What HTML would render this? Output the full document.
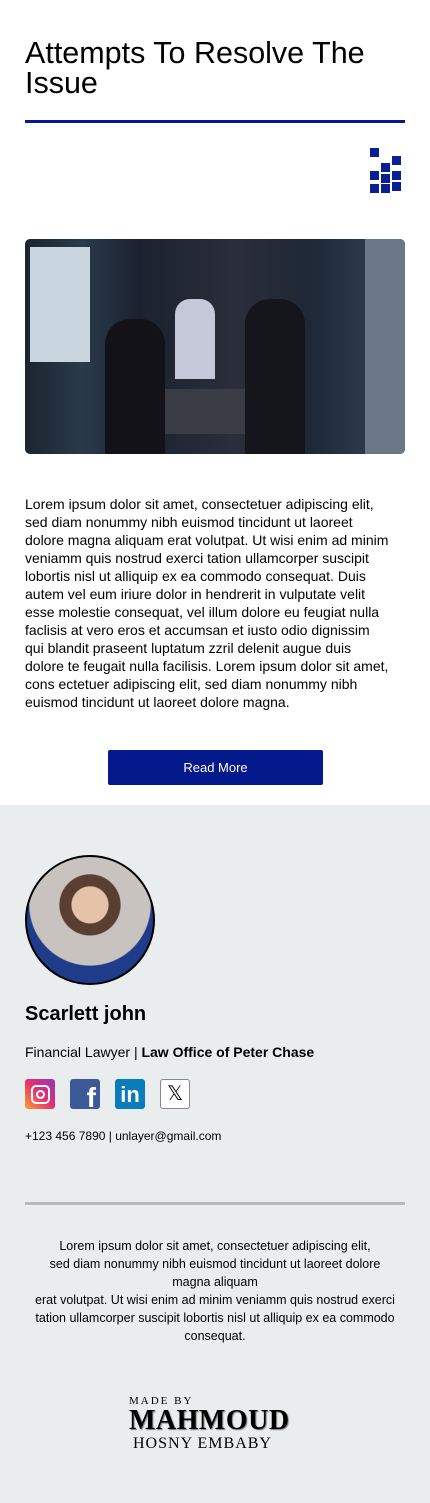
<!DOCTYPE html>
<html><head><meta charset="utf-8"><style>
body{margin:0;width:430px;font-family:"Liberation Sans",sans-serif;background:#fff;color:#000}
.top{position:relative;height:805px}
h1{position:absolute;left:25px;top:38px;margin:0;font-weight:normal;font-size:30.5px;line-height:30px;width:395px}
.rule{position:absolute;left:25px;top:120px;width:380px;height:3px;background:#041a8c}
.sq{position:absolute;width:9px;height:9px;background:#0a1f91}
.photo{position:absolute;left:25px;top:239px;width:380px;height:215px;border-radius:5px;overflow:hidden;background:linear-gradient(90deg,#1c2430 0%,#2a3a4a 15%,#1a2230 30%,#2b2e3a 55%,#1e2836 75%,#34465a 100%)}
.p{position:absolute;left:25px;top:495px;width:366px;font-size:14px;line-height:18px}
.btn{position:absolute;left:108px;top:750px;width:215px;height:35px;background:#041a8c;color:#fff;font-size:13px;text-align:center;line-height:35px;border-radius:2px}
.bot{position:relative;height:698px;background:#eaedee}
.av{position:absolute;left:25px;top:50px;width:126px;height:126px;border-radius:50%;border:2px solid #000;background:radial-gradient(circle at 50% 38%,#e6c2a8 0 18%,#5a3e32 19% 30%,#c9c3c0 31% 60%,#1f3c8a 61%)}
.name{position:absolute;left:25px;top:198px;font-size:20px;font-weight:bold}
.role{position:absolute;left:25px;top:239px;font-size:14px}
.ic{position:absolute;top:274px;width:30px;height:30px;border-radius:3px}
.ct{position:absolute;left:25px;top:324px;font-size:12px}
.hr{position:absolute;left:25px;top:397px;width:380px;height:3px;background:#b7b8ba}
.ft{position:absolute;left:35px;top:432px;width:360px;font-size:12.5px;line-height:18px;text-align:center}
.made{position:absolute;left:129px;top:590px;font-family:"Liberation Serif",serif;text-align:left}
</style></head><body>
<div class="top">
<h1>Attempts To Resolve The Issue</h1>
<div class="rule"></div>
<div class="sq" style="left:370px;top:148px"></div>
<div class="sq" style="left:392px;top:156px"></div>
<div class="sq" style="left:381px;top:163px"></div>
<div class="sq" style="left:370px;top:171px"></div>
<div class="sq" style="left:381px;top:174px"></div>
<div class="sq" style="left:392px;top:171px"></div>
<div class="sq" style="left:370px;top:184px"></div>
<div class="sq" style="left:381px;top:184px"></div>
<div class="sq" style="left:392px;top:182px"></div>
<div class="photo">
<div style="position:absolute;left:5px;top:8px;width:60px;height:115px;background:#c9d6e0"></div>
<div style="position:absolute;left:340px;top:0;width:40px;height:215px;background:#6a7888"></div>
<div style="position:absolute;left:95px;top:150px;width:170px;height:45px;background:#3a3c44"></div>
<div style="position:absolute;left:150px;top:60px;width:40px;height:80px;background:#c5c8d8;border-radius:15px 15px 0 0"></div>
<div style="position:absolute;left:220px;top:60px;width:60px;height:155px;background:#15161c;border-radius:25px 25px 0 0"></div>
<div style="position:absolute;left:80px;top:80px;width:60px;height:135px;background:#121218;border-radius:25px 25px 0 0"></div>
</div>
<div class="p">Lorem ipsum dolor sit amet, consectetuer adipiscing elit, sed diam nonummy nibh euismod tincidunt ut laoreet dolore magna aliquam erat volutpat. Ut wisi enim ad minim veniamm quis nostrud exerci tation ullamcorper suscipit lobortis nisl ut alliquip ex ea commodo consequat. Duis autem vel eum iriure dolor in hendrerit in vulputate velit esse molestie consequat, vel illum dolore eu feugiat nulla faclisis at vero eros et accumsan et iusto odio dignissim qui blandit praseent luptatum zzril delenit augue duis dolore te feugait nulla facilisis. Lorem ipsum dolor sit amet, cons ectetuer adipiscing elit, sed diam nonummy nibh euismod tincidunt ut laoreet dolore magna.</div>
<div class="btn">Read More</div>
</div>
<div class="bot">
<div class="av"></div>
<div class="name">Scarlett john</div>
<div class="role">Financial Lawyer | <b>Law Office of Peter Chase</b></div>
<div class="ic" style="left:25px;background:linear-gradient(45deg,#f9a233,#e62f6e 50%,#8a3ab9)"><div style="position:absolute;left:6px;top:6px;width:15px;height:15px;border:2px solid #fff;border-radius:5px"><div style="position:absolute;left:3px;top:3px;width:5px;height:5px;border:2px solid #fff;border-radius:50%"></div></div></div>
<div class="ic" style="left:70px;background:#3d5a98;color:#fff;font-weight:bold;font-size:28px;text-align:right;line-height:38px;overflow:hidden"><span style="margin-right:4px">f</span></div>
<div class="ic" style="left:115px;background:#0a7bbb;color:#fff;font-weight:bold;font-size:22px;text-align:center;line-height:32px">in</div>
<div class="ic" style="left:160px;background:#fff;border:1px solid #888;width:28px;height:28px;font-size:20px;text-align:center;line-height:28px">𝕏</div>
<div class="ct">+123 456 7890 | unlayer@gmail.com</div>
<div class="hr"></div>
<div class="ft">Lorem ipsum dolor sit amet, consectetuer adipiscing elit,<br>sed diam nonummy nibh euismod tincidunt ut laoreet dolore magna aliquam<br>erat volutpat. Ut wisi enim ad minim veniamm quis nostrud exerci tation ullamcorper suscipit lobortis nisl ut alliquip ex ea commodo consequat.</div>
<div class="made"><div style="font-size:11px;letter-spacing:2px">MADE BY</div><div style="font-size:28px;font-weight:bold;line-height:28px;letter-spacing:0.5px;text-shadow:1px 1px 1px #777">MAHMOUD</div><div style="font-size:16px;letter-spacing:1px;margin-left:4px">HOSNY EMBABY</div></div>
</div>
</body></html>
